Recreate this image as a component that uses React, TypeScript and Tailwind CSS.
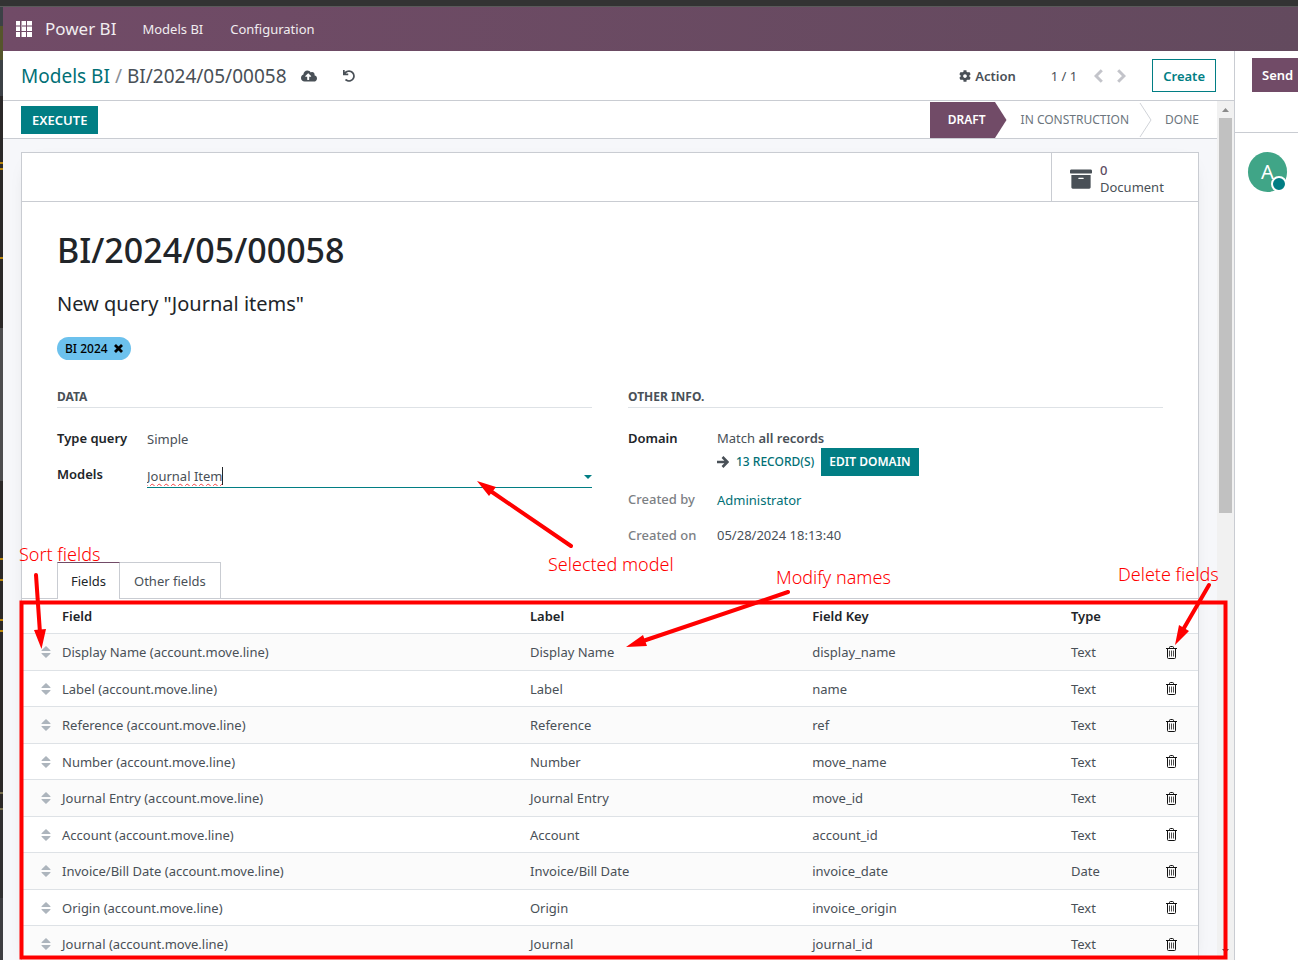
import type { ReactNode } from "react";
import { FaArchive, FaCloudUploadAlt, FaCog, FaUndo } from "react-icons/fa";

type FieldRow = { field: string; label: string; key: string; type: string };

const rows: FieldRow[] = [
  { field: "Display Name (account.move.line)", label: "Display Name", key: "display_name", type: "Text" },
  { field: "Label (account.move.line)", label: "Label", key: "name", type: "Text" },
  { field: "Reference (account.move.line)", label: "Reference", key: "ref", type: "Text" },
  { field: "Number (account.move.line)", label: "Number", key: "move_name", type: "Text" },
  { field: "Journal Entry (account.move.line)", label: "Journal Entry", key: "move_id", type: "Text" },
  { field: "Account (account.move.line)", label: "Account", key: "account_id", type: "Text" },
  { field: "Invoice/Bill Date (account.move.line)", label: "Invoice/Bill Date", key: "invoice_date", type: "Date" },
  { field: "Origin (account.move.line)", label: "Origin", key: "invoice_origin", type: "Text" },
  { field: "Journal (account.move.line)", label: "Journal", key: "journal_id", type: "Text" },
];

function GridIcon() {
  return (
    <svg width="16" height="16" viewBox="0 0 16 16" fill="#fff" shapeRendering="crispEdges" aria-hidden="true">
      <rect width="16" height="16" fill="#b39fae" />
      <path d="M4 0h1v16H4zM10 0h1v16h-1zM0 10h16v1H0z" fill="#714b67" />
      <path d="M0 0h4v4H0zM6 0h4v4H6zM11 0h5v4h-5zM0 6h4v4H0zM6 6h4v4H6zM11 6h5v4h-5zM0 11h4v5H0zM6 11h4v5H6zM11 11h5v5h-5z" />
    </svg>
  );
}

function SortIcon() {
  return (
    <svg width="10" height="12" viewBox="0 0 10 12" fill="#adb5bd" aria-hidden="true">
      <path d="M5 0l4.400 4.200c.3.4.1.9-.4.9H1c-.5 0-.7-.5-.4-.9zM5 12L.6 7.800c-.3-.4-.1-.9.4-.9h8c.5 0 .7.5.4.9z" />
    </svg>
  );
}

function TrashIcon() {
  return (
    <svg width="11" height="13" viewBox="0 0 11 13" fill="none" stroke="#111" aria-hidden="true">
      <path d="M0 2.500h11M1.500 3v8.500q0 1 1 1h6q1 0 1-1V3M3.500 2.200V1.500q0-1 1-1h2q1 0 1 1v.7" />
      <path d="M3.500 4.500v6M5.500 4.500v6M7.500 4.500v6" strokeOpacity=".75" />
    </svg>
  );
}

function ArrowIcon() {
  return (
    <svg width="12" height="12" viewBox="0 0 12 12" fill="none" stroke="#495057" strokeWidth="2.600" aria-hidden="true">
      <path d="M0 6h10M5.500 1l5 5-5 5" />
    </svg>
  );
}

function Chevron({ flip = false }: { flip?: boolean }) {
  return (
    <svg width="9" height="14" viewBox="0 0 9 14" fill="none" stroke="#c3c4ca" strokeWidth="3" aria-hidden="true">
      <path d={flip ? "M1.200 1.200L7 7l-5.800 5.800" : "M7.800 1.200L2 7l5.800 5.800"} />
    </svg>
  );
}

function GroupTitle({ children }: { children: ReactNode }) {
  return (
    <h2 className="h-[22px] border-b border-[#dee2e6] text-[12px] leading-[22px] font-bold text-[#495057]">{children}</h2>
  );
}

const edge: [string, string][] = [
  ["h-[19px]", "bg-[#3c4146]"],
  ["h-[34px]", "bg-[#55552b]"],
  ["h-[36px]", "bg-[#3c4146]"],
  ["h-[66px]", "bg-[#2b2929]"],
  ["h-[2px]", "bg-[#b8860b]"],
  ["h-[4px]", "bg-[#2b2929]"],
  ["h-[2px]", "bg-[#b8860b]"],
  ["h-[87px]", "bg-[#2b2929]"],
  ["h-[2px]", "bg-[#b8860b]"],
  ["h-[69px]", "bg-[#2b2929]"],
  ["h-[153px]", "bg-[#4d4d4f]"],
  ["h-[77px]", "bg-[#2b2929]"],
  ["h-[2px]", "bg-[#b8860b]"],
  ["h-[19px]", "bg-[#2b2929]"],
  ["h-[2px]", "bg-[#b8860b]"],
  ["h-[38px]", "bg-[#2b2929]"],
  ["h-[2px]", "bg-[#b8860b]"],
  ["h-[9px]", "bg-[#2b2929]"],
  ["h-[2px]", "bg-[#b8860b]"],
  ["h-[160px]", "bg-[#2b2929]"],
  ["h-[2px]", "bg-[#77704f]"],
  ["h-[14px]", "bg-[#2b2929]"],
  ["h-[2px]", "bg-[#77704f]"],
  ["h-[88px]", "bg-[#303032]"],
  ["flex-1", "bg-[#3c3d42]"],
];

function Annotations() {
  return (
    <div className="pointer-events-none absolute inset-0 overflow-hidden text-[18px] leading-6 font-light text-[#ff0000]">
      <svg className="absolute top-0 left-0" width="1298" height="960" viewBox="0 0 1298 960" fill="none" stroke="#ff0000" aria-hidden="true">
        <rect x="21.500" y="602.500" width="1204" height="355" strokeWidth="4" />
        <g strokeWidth="4" strokeLinecap="round">
          <path d="M36 575l4 58M571 546l-79-54M788 592l-145 49M1209 585l-25 43" />
        </g>
        <g fill="#ff0000" stroke="none">
          <path d="M34 630l12-1-4.500 20zM477 481l19 6-7 9zM626 647l17-12 4 11zM1175 645l4-20 10 6z" />
        </g>
      </svg>
      <span className="absolute top-[542px] left-[19px]">Sort fields</span>
      <span className="absolute top-[552px] left-[548px]">Selected model</span>
      <span className="absolute top-[565px] left-[776px]">Modify names</span>
      <span className="absolute top-[562px] left-[1118px]">Delete fields</span>
    </div>
  );
}

export default function App() {
  return (
    <div className="relative flex h-screen flex-col overflow-hidden bg-white font-['Noto_Sans','Open_Sans',sans-serif] text-[13px] leading-5 text-[#495057]">
      <div className="h-[7px] shrink-0 border-b border-[#5a5a5a] bg-[#333333]" />
      <div className="flex min-h-0 flex-1">
        <div className="flex w-[3px] shrink-0 flex-col overflow-hidden">
          {edge.map(([height, color], i) => (
            <div key={i} className={`shrink-0 ${height} ${color}`} />
          ))}
        </div>

        <div className="flex min-w-0 flex-1 flex-col">
          <nav className="flex h-11 shrink-0 items-center bg-linear-to-r from-[#714b67] to-[#634a5e] pl-[13px] text-[#f1edf0]">
            <button aria-label="Applications" className="block">
              <GridIcon />
            </button>
            <a href="#home" className="ml-[13px] text-[17px] leading-6">Power BI</a>
            <a href="#models" className="ml-[26px]">Models BI</a>
            <a href="#configuration" className="ml-[27px]">Configuration</a>
          </nav>

          <div className="flex min-h-0 flex-1">
            <main className="flex min-w-0 flex-1 flex-col">
              <header className="flex h-[50px] shrink-0 items-center border-b border-[#c9ccd2] pr-[18px] pl-[18px]">
                <div className="flex gap-[5px] text-[19px] leading-7">
                  <a href="#models" className="text-[#017076]">Models BI</a>
                  <span className="text-[#8a8f96]">/</span>
                  <span>BI/2024/05/00058</span>
                </div>
                <button aria-label="Save manually" className="ml-[14px]">
                  <FaCloudUploadAlt size={16} />
                </button>
                <button aria-label="Discard changes" className="ml-[26px]">
                  <FaUndo size={12} />
                </button>
                <button className="ml-auto flex items-center gap-1 font-semibold">
                  <FaCog size={12} />
                  Action
                </button>
                <span className="ml-[35px]">1 / 1</span>
                <button aria-label="Previous" className="ml-[17px]">
                  <Chevron />
                </button>
                <button aria-label="Next" className="ml-[14px]">
                  <Chevron flip />
                </button>
                <button className="ml-[26px] h-[33px] border border-[#017e84] px-[10px] font-semibold text-[#017e84]">Create</button>
              </header>

              <div className="flex min-h-0 flex-1">
                <div className="min-w-0 flex-1 overflow-hidden bg-[#f6f7fa]">
                  <div className="flex h-[38px] items-center justify-between border-b border-[#c9ccd2] bg-white pl-[18px]">
                    <button className="h-7 bg-[#017e84] px-[11px] font-semibold text-white">EXECUTE</button>
                    <div className="flex h-full items-center text-[12px] text-[#6c757d]">
                      <button className="mt-px flex h-9 items-center">
                        <span className="flex h-full items-center bg-[#714b67] pr-[9px] pl-[18px] font-semibold text-white">DRAFT</span>
                        <svg width="12" height="36" viewBox="0 0 12 36" fill="#714b67" aria-hidden="true">
                          <path d="M0 0l11.500 18L0 36z" />
                        </svg>
                      </button>
                      <button className="ml-[14px]">IN CONSTRUCTION</button>
                      <svg className="ml-[10px]" width="13" height="34" viewBox="0 0 13 34" fill="none" stroke="#d0d3d8" aria-hidden="true">
                        <path d="M1 0l11 17L1 34" />
                      </svg>
                      <button className="mr-[18px] ml-[13px]">DONE</button>
                    </div>
                  </div>

                  <div className="mt-[13px] mr-[18px] ml-[18px] border border-[#c9ccd2] bg-white shadow-[0_5px_20px_-15px_rgba(0,0,0,0.4)]">
                    <div className="flex h-[49px] justify-end border-b border-[#c9ccd2]">
                      <button className="flex w-[147px] items-center border-l border-[#c9ccd2] pt-[3px] pl-[18px] text-left">
                        <FaArchive size={22} className="text-[#495057]" />
                        <span className="ml-2 flex flex-col leading-[17px]">
                          <span className="font-medium text-[#5d4c62]">0</span>
                          <span>Document</span>
                        </span>
                      </button>
                    </div>

                    <div className="px-[35px] pt-[26px]">
                      <h1 className="text-[34px] leading-[44px] font-medium text-[#212529]">BI/2024/05/00058</h1>
                      <p className="mt-4 text-[20px] leading-8 text-[#212529]">New query "Journal items"</p>
                      <div className="mt-[17px] inline-flex h-[23px] items-center rounded-full bg-[#6cc1ed] px-2 text-[12px] font-medium text-black">
                        BI 2024
                        <button aria-label="Remove tag" className="ml-[6px]">
                          <svg width="9" height="9" viewBox="0 0 9 9" stroke="#000" strokeWidth="2.800" aria-hidden="true">
                            <path d="M1 1l7 7M8 1L1 8" />
                          </svg>
                        </button>
                      </div>

                      <div className="mt-[26px] grid h-[176px] grid-cols-2 content-start gap-9">
                        <section>
                          <GroupTitle>DATA</GroupTitle>
                          <div className="mt-5 flex">
                            <span className="w-[90px] font-semibold text-[#212529]">Type query</span>
                            <span className="mt-px">Simple</span>
                          </div>
                          <div className="mt-[15px] flex">
                            <label htmlFor="models" className="w-[90px] font-semibold text-[#212529]">Models</label>
                            <div className="flex h-6 flex-1 items-center border-b border-[#017e84]">
                              <input
                                id="models"
                                defaultValue="Journal Item"
                                className="field-sizing-content bg-transparent leading-5 underline decoration-[#f04040] decoration-wavy decoration-1 underline-offset-2 outline-none [text-decoration-skip-ink:none]"
                              />
                              <span className="h-[18px] w-px bg-[#212529]" />
                              <svg className="mt-[3px] ml-auto" width="8" height="4" viewBox="0 0 8 4" fill="#017e84" aria-hidden="true">
                                <path d="M0 0h8L4 4z" />
                              </svg>
                            </div>
                          </div>
                        </section>
                        <section>
                          <GroupTitle>OTHER INFO.</GroupTitle>
                          <div className="mt-5 flex">
                            <span className="w-[89px] font-semibold text-[#212529]">Domain</span>
                            <div>
                              <p>Match <b className="font-semibold">all records</b></p>
                              <div className="flex h-7 items-center text-[12px]">
                                <ArrowIcon />
                                <a href="#records" className="ml-[7px] font-medium text-[#017076]">13 RECORD(S)</a>
                                <button className="ml-[7px] h-7 bg-[#017e84] px-2 font-semibold text-white">EDIT DOMAIN</button>
                              </div>
                            </div>
                          </div>
                          <div className="mt-[13px] flex">
                            <span className="w-[89px] font-medium text-[#7c8084]">Created by</span>
                            <a href="#administrator" className="mt-px text-[#017076]">Administrator</a>
                          </div>
                          <div className="mt-[15px] flex">
                            <span className="w-[89px] font-medium text-[#7c8084]">Created on</span>
                            <span>05/28/2024 18:13:40</span>
                          </div>
                        </section>
                      </div>
                    </div>

                    <div role="tablist" className="flex h-[37px] border-b border-[#c9ccd2] pl-[35px]">
                      <button role="tab" aria-selected="true" className="h-[37px] border-x border-t border-x-[#c9ccd2] border-t-[#714b67] bg-white px-[13px] text-[#212529]">Fields</button>
                      <button role="tab" aria-selected="false" className="border-t border-r border-[#c9ccd2] px-[14px]">Other fields</button>
                    </div>

                    <table className="w-full table-fixed border-separate border-spacing-0 text-left">
                      <colgroup>
                        <col className="w-8" />
                        <col />
                        <col className="w-[24%]" />
                        <col className="w-[22%]" />
                        <col className="w-[8%]" />
                        <col className="w-[41px]" />
                      </colgroup>
                      <thead>
                        <tr className="h-[35px] text-[#212529]">
                          <th className="border-b border-[#dee2e6]" />
                          <th className="border-b border-[#dee2e6] px-2 font-semibold">Field</th>
                          <th className="border-b border-[#dee2e6] px-2 font-semibold">Label</th>
                          <th className="border-b border-[#dee2e6] px-2 font-semibold">Field Key</th>
                          <th className="border-b border-[#dee2e6] px-2 font-semibold">Type</th>
                          <th className="border-b border-[#dee2e6]" />
                        </tr>
                      </thead>
                      <tbody>
                        {rows.map((row) => (
                          <tr key={row.key} className="odd:h-[37px] odd:bg-[#fbfbfb] even:h-9">
                            <td className="border-b border-[#dee2e6] pl-[19px]"><SortIcon /></td>
                            <td className="border-b border-[#dee2e6] px-2">{row.field}</td>
                            <td className="border-b border-[#dee2e6] px-2">{row.label}</td>
                            <td className="border-b border-[#dee2e6] px-2">{row.key}</td>
                            <td className="border-b border-[#dee2e6] px-2">{row.type}</td>
                            <td className="border-b border-[#dee2e6] pl-[9px]">
                              <button aria-label={`Delete ${row.label}`} className="block"><TrashIcon /></button>
                            </td>
                          </tr>
                        ))}
                      </tbody>
                    </table>
                  </div>
                </div>

                <div className="flex w-[17px] shrink-0 flex-col items-center bg-[#f1f1f1]">
                  <svg className="mt-[7px]" width="7" height="4" viewBox="0 0 7 4" fill="#8b8b8b" aria-hidden="true">
                    <path d="M0 4h7L3.500 0z" />
                  </svg>
                  <div className="mt-[6px] h-[395px] w-[13px] bg-[#c1c1c1]" />
                  <svg className="mt-auto mb-[7px]" width="7" height="4" viewBox="0 0 7 4" fill="#505050" aria-hidden="true">
                    <path d="M0 0h7L3.500 4z" />
                  </svg>
                </div>
              </div>
            </main>

            <aside className="w-16 shrink-0 overflow-hidden border-l border-[#c9ccd2]">
              <div className="h-[82px] border-b border-[#c9ccd2] pt-[7px] pl-[17px]">
                <button className="h-[34px] w-[110px] bg-[#714b67] pl-[10px] text-left font-semibold text-white">Send</button>
              </div>
              <div className="relative mt-[19px] ml-[13px] flex h-10 w-[39px] items-center justify-center rounded-full bg-[#40a587] text-[20px] text-white">
                A
                <span className="absolute right-0 bottom-0 size-4 rounded-full border-2 border-white bg-[#017e84]" />
              </div>
            </aside>
          </div>
        </div>
      </div>
      <Annotations />
    </div>
  );
}
